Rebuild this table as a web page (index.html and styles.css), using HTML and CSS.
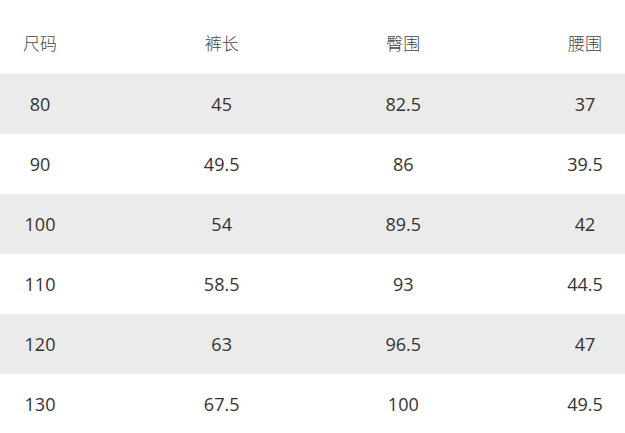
FILE: index.html
```html
<!DOCTYPE html>
<html lang="zh">
<head>
<meta charset="utf-8">
<link rel="stylesheet" href="styles.css">
</head>
<body>
<div class="table">
  <div class="row head">
    <div class="cell">尺码</div><div class="cell">裤长</div><div class="cell">臀围</div><div class="cell">腰围</div>
  </div>
  <div class="row alt">
    <div class="cell">80</div><div class="cell">45</div><div class="cell">82.5</div><div class="cell">37</div>
  </div>
  <div class="row">
    <div class="cell">90</div><div class="cell">49.5</div><div class="cell">86</div><div class="cell">39.5</div>
  </div>
  <div class="row alt">
    <div class="cell">100</div><div class="cell">54</div><div class="cell">89.5</div><div class="cell">42</div>
  </div>
  <div class="row">
    <div class="cell">110</div><div class="cell">58.5</div><div class="cell">93</div><div class="cell">44.5</div>
  </div>
  <div class="row alt">
    <div class="cell">120</div><div class="cell">63</div><div class="cell">96.5</div><div class="cell">47</div>
  </div>
  <div class="row">
    <div class="cell">130</div><div class="cell">67.5</div><div class="cell">100</div><div class="cell">49.5</div>
  </div>
</div>
</body>
</html>
```
FILE: styles.css
```css
html, body {
  margin: 0;
  padding: 0;
  background: #fff;
}
body {
  width: 625px;
  height: 433px;
  overflow: hidden;
  font-family: "Open Sans", "Noto Sans CJK SC", sans-serif;
  color: #333;
}
.table {
  display: flex;
  flex-direction: column;
}
.row {
  display: grid;
  grid-template-columns: repeat(4, 80px);
  column-gap: 101.67px;
  height: 60px;
  align-items: center;
  font-size: 18px;
}
.row.head {
  height: 74px;
  padding-top: 11px;
  box-sizing: border-box;
  font-family: "Noto Sans CJK SC", sans-serif;
  font-weight: 300;
  font-size: 17px;
  color: #444;
  border-bottom: 1px solid #f4f4f4;
}
.row.alt {
  background: #ebebeb;
  border-bottom: 1px solid #f2f2f2;
  box-sizing: border-box;
}
.cell {
  text-align: center;
  line-height: 1;
}
```
